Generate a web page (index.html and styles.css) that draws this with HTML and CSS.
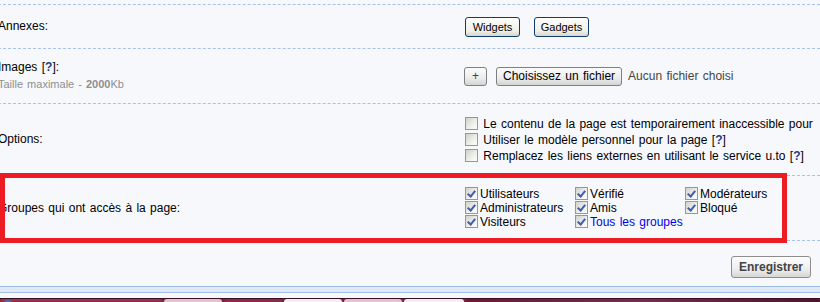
FILE: index.html
```html
<!DOCTYPE html>
<html lang="fr">
<head>
	<meta charset="UTF-8">
	<title>Page</title>
	<link rel="stylesheet" href="styles.css">
</head>
<body>
	<div class="page">
		<div class="form">
			<div class="row row-annexes">
				<div class="label">Annexes:</div>
				<div class="field">
					<button class="xp">Widgets</button>
					<button class="xp">Gadgets</button>
				</div>
			</div>
			<div class="row row-images">
				<div class="label">
					Images <span class="help">[<b>?</b>]</span>:
					<div class="hint">Taille maximale - <b>2000</b>Kb</div>
				</div>
				<div class="field">
					<button class="plain plus">+</button>
					<button class="plain">Choisissez un fichier</button>
					<span class="nofile">Aucun fichier choisi</span>
				</div>
			</div>
			<div class="row row-options">
				<div class="label">Options:</div>
				<div class="field">
					<ul class="options">
						<li><input type="checkbox" class="cb"> Le contenu de la page est temporairement inaccessible pour</li>
						<li><input type="checkbox" class="cb"> Utiliser le modèle personnel pour la page <span class="help">[<b>?</b>]</span></li>
						<li><input type="checkbox" class="cb"> Remplacez les liens externes en utilisant le service u.to <span class="help">[<b>?</b>]</span></li>
					</ul>
				</div>
			</div>
			<div class="row row-groups">
				<div class="label">Groupes qui ont accès à la page:</div>
				<div class="field">
					<ul class="groups">
						<li><input type="checkbox" class="cb" checked>Utilisateurs</li>
						<li><input type="checkbox" class="cb" checked>Vérifié</li>
						<li><input type="checkbox" class="cb" checked>Modérateurs</li>
						<li><input type="checkbox" class="cb" checked>Administrateurs</li>
						<li><input type="checkbox" class="cb" checked>Amis</li>
						<li><input type="checkbox" class="cb" checked>Bloqué</li>
						<li><input type="checkbox" class="cb" checked>Visiteurs</li>
						<li><input type="checkbox" class="cb" checked><a class="all">Tous les groupes</a></li>
					</ul>
				</div>
				<div class="mark"></div>
			</div>
		</div>
		<div class="actions">
			<button class="save">Enregistrer</button>
		</div>
	</div>
	<div class="statusbar"></div>
	<div class="taskbar">
		<span class="tb start"><i></i></span>
		<span class="tb light"></span>
		<span class="tb"></span>
		<span class="tb white"></span>
		<span class="tb light"></span>
		<span class="tb white short"></span>
		<span class="tb dark"></span>
	</div>
</body>
</html>
```

FILE: styles.css
```css
*{
	margin: 0;
	padding: 0;
	box-sizing: border-box;
}
html, body{
	overflow: hidden;
}
body{
	width: 820px;
	height: 302px;
	background-color: #f6f8fc;
	font-family: "Liberation Sans", Arial, sans-serif;
	font-size: 12px;
	word-spacing: 1px;
	color: #000;
	white-space: nowrap;
}
.page{
	padding-top: 4px;
}
.form{
	margin-left: -2px;
	border-top: 1px dashed #a9c0e8;
}
.row{
	position: relative;
	display: grid;
	grid-template-columns: 467px 1fr;
	align-items: center;
	border-bottom: 1px dashed #a9c0e8;
}
.row-annexes{
	height: 44px;
}
.row-images{
	height: 55px;
}
.row-options{
	height: 72px;
}
.row-groups{
	height: 65px;
}
.label{
	line-height: 17px;
}
.hint{
	font-size: 11px;
	color: #8f8f8f;
	line-height: 17px;
}
.help b{
	color: #1d3f86;
}
.field{
	display: flex;
	align-items: center;
}
/* boutons xp */
.xp{
	width: 55px;
	height: 20px;
	margin-right: 14px;
	margin-top: 1px;
	border: 1px solid #0e3d6e;
	border-radius: 3px;
	background: linear-gradient(#fdfdfb, #f1f0ea 70%, #d8d6cc);
	font-family: "Liberation Sans", Arial, sans-serif;
	font-size: 11px;
	color: #000;
}
.plain{
	height: 19px;
	padding: 0 6px;
	margin-right: 9px;
	border: 1px solid #7f7f7f;
	border-radius: 3px;
	background: linear-gradient(#fbfbfb, #ececec 60%, #d4d4d4);
	font-family: "Liberation Sans", Arial, sans-serif;
	font-size: 12px;
	word-spacing: 1px;
	color: #000;
}
.plain.plus{
	width: 23px;
	padding: 0;
	color: #444;
	margin-left: -1px;
}
.nofile{
	margin-left: -3px;
	color: #444;
}
/* cases a cocher */
.cb{
	appearance: none;
	-webkit-appearance: none;
	position: relative;
	width: 13px;
	height: 13px;
	border: 1px solid #8d99a6;
	background: linear-gradient(135deg, #d2d2cc, #f4f4f1 70%, #fdfdfc);
	vertical-align: -2px;
}
.cb:checked::after{
	content: "";
	position: absolute;
	left: 3px;
	top: 1px;
	width: 3px;
	height: 6px;
	border-right: 2px solid #3f5cb0;
	border-bottom: 2px solid #3f5cb0;
	transform: rotate(40deg);
}
.options{
	list-style: none;
}
.options li{
	height: 16px;
	line-height: 16px;
}
.options .cb{
	margin-right: 1px;
}
.groups{
	list-style: none;
	display: grid;
	grid-template-columns: 110px 110px 110px;
	word-spacing: 0;
}
.groups li{
	height: 14px;
	line-height: 14px;
}
.groups .cb{
	margin-right: 2px;
}
.all{
	color: #0000ee;
	word-spacing: 1px;
}
.mark{
	position: absolute;
	left: 2px;
	top: -3px;
	width: 787px;
	height: 70px;
	border: 5px solid #ed1c24;
}
.actions{
	display: flex;
	justify-content: flex-end;
	padding: 15px 9px 0 0;
}
.save{
	width: 80px;
	height: 22px;
	border: 1px solid #8d8d8d;
	border-radius: 3px;
	background: linear-gradient(#fcfcfc, #eeeeee 60%, #d6d6d6);
	font-family: "Liberation Sans", Arial, sans-serif;
	font-size: 12px;
	font-weight: bold;
	color: #444;
}
.statusbar{
	margin-top: 8px;
	height: 7px;
	border-top: 1px solid #9dbde8;
	border-bottom: 1px solid #a4c0e8;
	background: #dfe9f7;
}
.taskbar{
	display: flex;
	margin-top: 5px;
	height: 6px;
	border-top: 1px solid #3a1020;
	background: #7e2238;
}
.tb{
	flex: 0 0 58px;
	margin-right: 2px;
	border-radius: 3px 3px 0 0;
	background: #8a2c44;
}
.tb.start{
	flex-basis: 162px;
	background: linear-gradient(#9b3a52, #7e2238);
}
.tb.start i{
	display: block;
	width: 12px;
	height: 12px;
	border-radius: 50%;
	background: #3b78c0;
	margin: 1px 0 0 2px;
}
.tb.light{
	background: #e4c4cc;
}
.tb.white{
	background: #f5eef0;
}
.tb.short{
	flex-basis: 60px;
}
.tb.dark{
	flex: 1;
	margin: 0;
	background: linear-gradient(90deg, #6c1a30, #7a2a4a 50%, #501428);
}
```
